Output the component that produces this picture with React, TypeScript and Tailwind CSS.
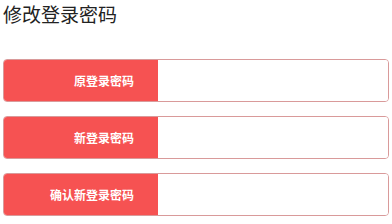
import React from "react";

const labels = ["原登录密码", "新登录密码", "确认新登录密码"];

export default function App() {
  return (
    <div
      className="w-[392px] h-[224px] bg-white pl-[3px] pt-[2px]"
      style={{ fontFamily: '"Noto Sans CJK SC", "Liberation Sans", sans-serif' }}
    >
      <div className="text-[19px] leading-[24px] text-[#222222]">修改登录密码</div>
      <div className="mt-[33px] flex flex-col gap-[14px] w-[386px]">
        {labels.map((l) => (
          <div
            key={l}
            className="flex h-[43px] rounded-[4px] border border-[#d99a9a] overflow-hidden"
          >
            <div className="w-[154px] bg-[#f65252] text-white font-bold text-[12px] flex items-center justify-end pr-[24px]">
              {l}
            </div>
            <input type="password" className="flex-1 bg-white outline-none" />
          </div>
        ))}
      </div>
    </div>
  );
}
